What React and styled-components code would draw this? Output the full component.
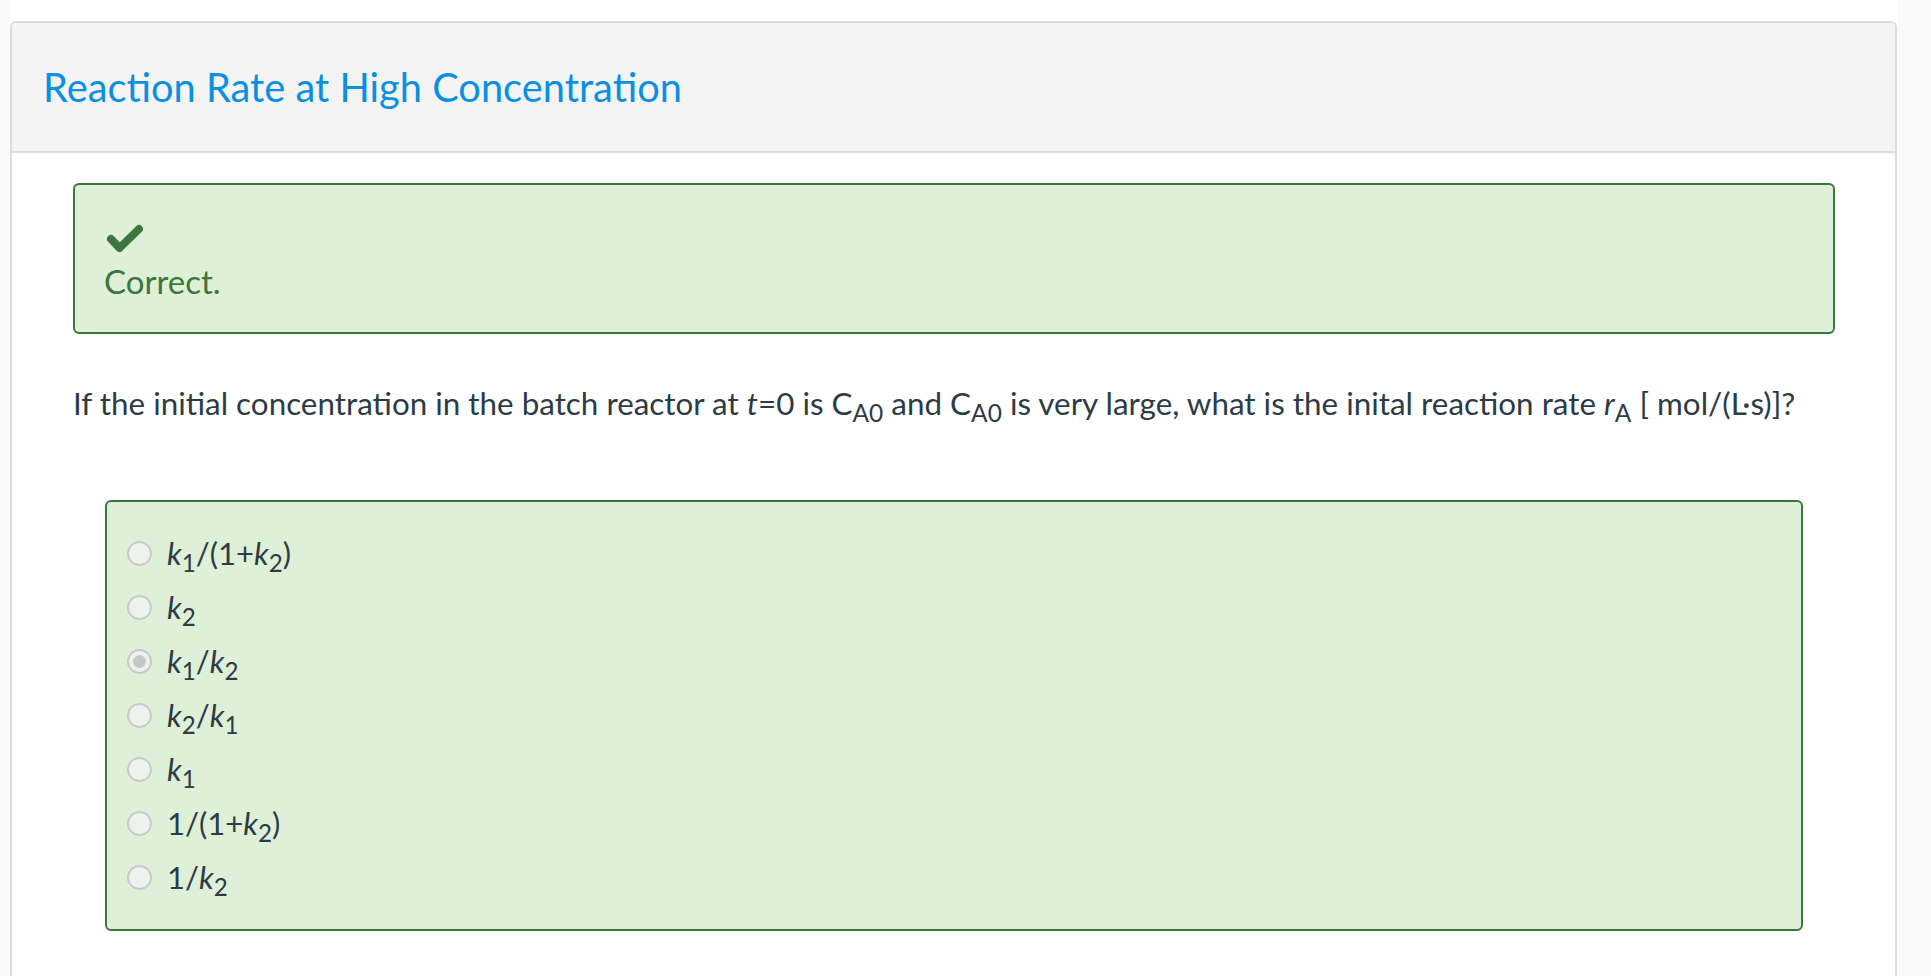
import { createGlobalStyle, styled } from "styled-components";

const GlobalStyle = createGlobalStyle`
  body {
    margin: 0;
    background: #fafafa;
    font-family: "Lato", "Open Sans", sans-serif;
    color: #2d3b45;
    overflow: hidden;
  }
`;

const Page = styled.div`
  margin-left: 10px;
  width: 1887px;
  min-height: 100vh;
  background: #ffffff;
  padding-top: 21px;
  box-sizing: border-box;
`;

const Panel = styled.section`
  border: 2px solid #dddddd;
  border-bottom: none;
  border-radius: 6px 6px 0 0;
  min-height: calc(100vh - 21px);
  box-sizing: border-box;
`;

const Header = styled.header`
  height: 128px;
  background: #f4f4f4;
  border-bottom: 2px solid #dddddd;
  border-radius: 5px 5px 0 0;
  display: flex;
  align-items: center;
  padding-left: 31px;
  h2 {
    margin: 0;
    font-size: 39.8px;
    line-height: 48px;
    font-weight: 400;
    color: #0a8fe2;
  }
`;

const Body = styled.div`
  padding: 30px 60px 40px 61px;
`;

const Alert = styled.div`
  border: 2px solid #3c763d;
  border-radius: 6px;
  background: #dff0d8;
  color: #3c763d;
  padding: 38px 29px 0 29px;
  height: 151px;
  box-sizing: border-box;
  svg {
    display: block;
    margin: 0 0 7px 2px;
  }
  p {
    margin: 0;
    font-size: 33px;
    line-height: 40px;
  }
`;

const Question = styled.p`
  margin: 49px 0 0;
  font-size: 31.4px;
  line-height: 40px;
  color: #2d3b45;
  sub {
    font-size: 0.78em;
    vertical-align: -0.3em;
    line-height: 0;
  }
`;

const Answers = styled.div`
  margin: 77px 32px 0;
  border: 2px solid #3c763d;
  border-radius: 6px;
  background: #dff0d8;
  padding: 24px 20px 25px;
`;

const Option = styled.label`
  display: flex;
  align-items: center;
  gap: 15px;
  height: 54px;
  font-size: 31px;
  color: #2d3b45;
  sub {
    font-size: 0.78em;
    vertical-align: -0.3em;
    line-height: 0;
  }
`;

const Radio = styled.span`
  width: 25px;
  height: 25px;
  border-radius: 50%;
  border: 2px solid #cacaca;
  background: #eef2ec;
  box-sizing: border-box;
  display: flex;
  align-items: center;
  justify-content: center;
  flex-shrink: 0;
  &::after {
    content: "";
    width: 13px;
    height: 13px;
    border-radius: 50%;
    background: ${(p) => (p.$checked ? "#c5c8c4" : "transparent")};
  }
`;

const K = ({ n }) => (
  <>
    <i>k</i>
    <sub>{n}</sub>
  </>
);

const options = [
  { id: 1, label: <>
      <K n="1" />/(1+<K n="2" />)
    </> },
  { id: 2, label: <K n="2" /> },
  { id: 3, label: <>
      <K n="1" />/<K n="2" />
    </>, checked: true },
  { id: 4, label: <>
      <K n="2" />/<K n="1" />
    </> },
  { id: 5, label: <K n="1" /> },
  { id: 6, label: <>1/(1+<K n="2" />)</> },
  { id: 7, label: <>1/<K n="2" /></> },
];

const App = () => {
  return (
    <>
      <GlobalStyle />
      <Page>
        <Panel>
          <Header>
            <h2>Reaction Rate at High Concentration</h2>
          </Header>
          <Body>
            <Alert>
              <svg width="38" height="31" viewBox="0 0 38 31">
                <polyline
                  points="5,16 13.5,25 33,6"
                  fill="none"
                  stroke="#3c763d"
                  strokeWidth="8"
                  strokeLinecap="round"
                  strokeLinejoin="round"
                />
              </svg>
              <p>Correct.</p>
            </Alert>
            <Question>
              If the initial concentration in the batch reactor at <i>t</i>=0
              is C<sub>A0</sub> and C<sub>A0</sub> is very large, what is the
              inital reaction rate <i>r</i><sub>A</sub> [ mol/(L·s)]?
            </Question>
            <Answers>
              {options.map((o) => (
                <Option key={o.id}>
                  <Radio $checked={o.checked} />
                  <span>{o.label}</span>
                </Option>
              ))}
            </Answers>
          </Body>
        </Panel>
      </Page>
    </>
  );
};

export default App;
